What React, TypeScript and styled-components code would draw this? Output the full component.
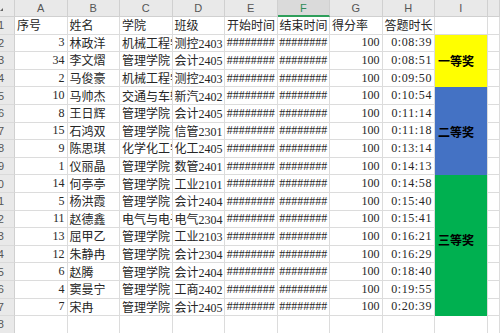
import styled, { createGlobalStyle } from 'styled-components';

const GlobalStyle = createGlobalStyle`
  html, body {
    margin: 0;
    padding: 0;
    background: #ffffff;
    overflow: hidden;
  }
`;

const cols = ['A', 'B', 'C', 'D', 'E', 'F', 'G', 'H', 'I', ''];

type Row = {
  no: number;
  name: string;
  school: string;
  cls: string;
  time: string;
};

const rows: Row[] = [
  { no: 3, name: '林政洋', school: '机械工程学院', cls: '测控2403', time: '0:08:39' },
  { no: 34, name: '李文熠', school: '管理学院', cls: '会计2405', time: '0:08:51' },
  { no: 2, name: '马俊豪', school: '机械工程学院', cls: '测控2403', time: '0:09:50' },
  { no: 10, name: '马帅杰', school: '交通与车辆工程学院', cls: '新汽2402', time: '0:10:54' },
  { no: 8, name: '王日辉', school: '管理学院', cls: '会计2405', time: '0:11:14' },
  { no: 15, name: '石鸿双', school: '管理学院', cls: '信管2301', time: '0:11:18' },
  { no: 9, name: '陈思琪', school: '化学化工学院', cls: '化工2405', time: '0:13:14' },
  { no: 1, name: '仪丽晶', school: '管理学院', cls: '数管2401', time: '0:14:13' },
  { no: 14, name: '何亭亭', school: '管理学院', cls: '工业2101', time: '0:14:58' },
  { no: 5, name: '杨洪霞', school: '管理学院', cls: '会计2404', time: '0:15:40' },
  { no: 11, name: '赵德鑫', school: '电气与电子工程学院', cls: '电气2304', time: '0:15:41' },
  { no: 13, name: '屈甲乙', school: '管理学院', cls: '工业2103', time: '0:16:21' },
  { no: 12, name: '朱静冉', school: '管理学院', cls: '会计2304', time: '0:16:29' },
  { no: 6, name: '赵腾', school: '管理学院', cls: '会计2404', time: '0:18:40' },
  { no: 4, name: '窦曼宁', school: '管理学院', cls: '工商2402', time: '0:19:55' },
  { no: 7, name: '宋冉', school: '管理学院', cls: '会计2405', time: '0:20:39' },
];

// merged prize cells in column I, keyed by first data index
const prizes: Record<number, { label: string; span: number; bg: string; lift: number }> = {
  0: { label: '一等奖', span: 3, bg: '#ffff00', lift: 0 },
  3: { label: '二等奖', span: 5, bg: '#4472c4', lift: 0 },
  8: { label: '三等奖', span: 8, bg: '#00b050', lift: 12 },
};

const Sheet = styled.div`
  display: grid;
  grid-template-columns: 15px repeat(9, 52.5px) 1fr;
  grid-template-rows: 17px repeat(18, 17.6px);
  width: 500px;
  height: 333px;
  overflow: hidden;
  font-family: 'Liberation Serif', 'Noto Sans CJK SC', serif;
  font-size: 12px;
  color: #262626;
`;

const Corner = styled.div`
  display: flex;
  align-items: center;
  background: #e9e9e9;
  border-right: 1px solid #d0d0d0;
  border-bottom: 1px solid #d0d0d0;
  box-sizing: border-box;
`;

const Tri = styled.span`
  width: 0;
  height: 0;
  margin-top: 3px;
  border-left: 3px solid transparent;
  border-bottom: 3px solid #666;
`;

const ColHeader = styled.div<{ $active?: boolean }>`
  display: flex;
  align-items: center;
  justify-content: center;
  box-sizing: border-box;
  background: ${(p) => (p.$active ? '#dadada' : '#e9e9e9')};
  border-right: 1px solid #d0d0d0;
  border-bottom: ${(p) => (p.$active ? '2px solid #2e9e5a' : '1px solid #d0d0d0')};
  color: ${(p) => (p.$active ? '#2e8b57' : '#555')};
  font-family: 'Liberation Sans', 'Noto Sans', sans-serif;
  font-size: 11px;
`;

const RowHeader = styled.div`
  display: flex;
  align-items: center;
  justify-content: flex-end;
  padding-right: 10px;
  box-sizing: border-box;
  overflow: hidden;
  background: #e9e9e9;
  border-right: 1px solid #d0d0d0;
  border-bottom: 1px solid #dadada;
  color: #555;
  font-family: 'Liberation Sans', 'Noto Sans', sans-serif;
  font-size: 11px;
`;

const Cell = styled.div<{ $align?: 'left' | 'right' | 'center'; $track?: number }>`
  display: flex;
  align-items: center;
  justify-content: ${(p) =>
    p.$align === 'right' ? 'flex-end' : p.$align === 'center' ? 'center' : 'flex-start'};
  padding: 0 2px;
  box-sizing: border-box;
  overflow: hidden;
  white-space: nowrap;
  letter-spacing: ${(p) => p.$track ?? 0}px;
  border-right: 1px solid #dcdcdc;
  border-bottom: 1px solid #dcdcdc;
`;

const Prize = styled.div<{ $span: number; $bg: string; $lift: number }>`
  grid-row: span ${(p) => p.$span};
  display: flex;
  align-items: center;
  padding: 0 2px ${(p) => p.$lift}px 3px;
  box-sizing: border-box;
  background: ${(p) => p.$bg};
  border-right: 1px solid #dcdcdc;
  color: #000;
  font-family: 'Noto Sans CJK SC', serif;
  font-weight: 700;
  font-size: 12px;
  white-space: nowrap;
`;

export default function App() {
  return (
    <>
      <GlobalStyle />
      <Sheet>
        <Corner>
          <Tri />
        </Corner>
        {cols.map((c, i) => (
          <ColHeader key={i} $active={c === 'F'}>
            {c}
          </ColHeader>
        ))}

        <RowHeader>1</RowHeader>
        <Cell>序号</Cell>
        <Cell>姓名</Cell>
        <Cell>学院</Cell>
        <Cell>班级</Cell>
        <Cell>开始时间</Cell>
        <Cell>结束时间</Cell>
        <Cell>得分率</Cell>
        <Cell>答题时长</Cell>
        <Cell />
        <Cell />

        {rows.map((r, i) => (
          <Row key={i} r={r} index={i} />
        ))}

        <RowHeader>18</RowHeader>
        {cols.map((_, i) => (
          <Cell key={i} />
        ))}
      </Sheet>
    </>
  );
}

function Row({ r, index }: { r: Row; index: number }) {
  const prize = prizes[index];
  return (
    <>
      <RowHeader>{index + 2}</RowHeader>
      <Cell $align="right">{r.no}</Cell>
      <Cell>{r.name}</Cell>
      <Cell>{r.school}</Cell>
      <Cell>{r.cls}</Cell>
      <Cell $align="center">########</Cell>
      <Cell $align="center">########</Cell>
      <Cell $align="right">100</Cell>
      <Cell $align="right" $track={0.6}>
        {r.time}
      </Cell>
      {prize && (
        <Prize $span={prize.span} $bg={prize.bg} $lift={prize.lift}>
          {prize.label}
        </Prize>
      )}
      <Cell />
    </>
  );
}
